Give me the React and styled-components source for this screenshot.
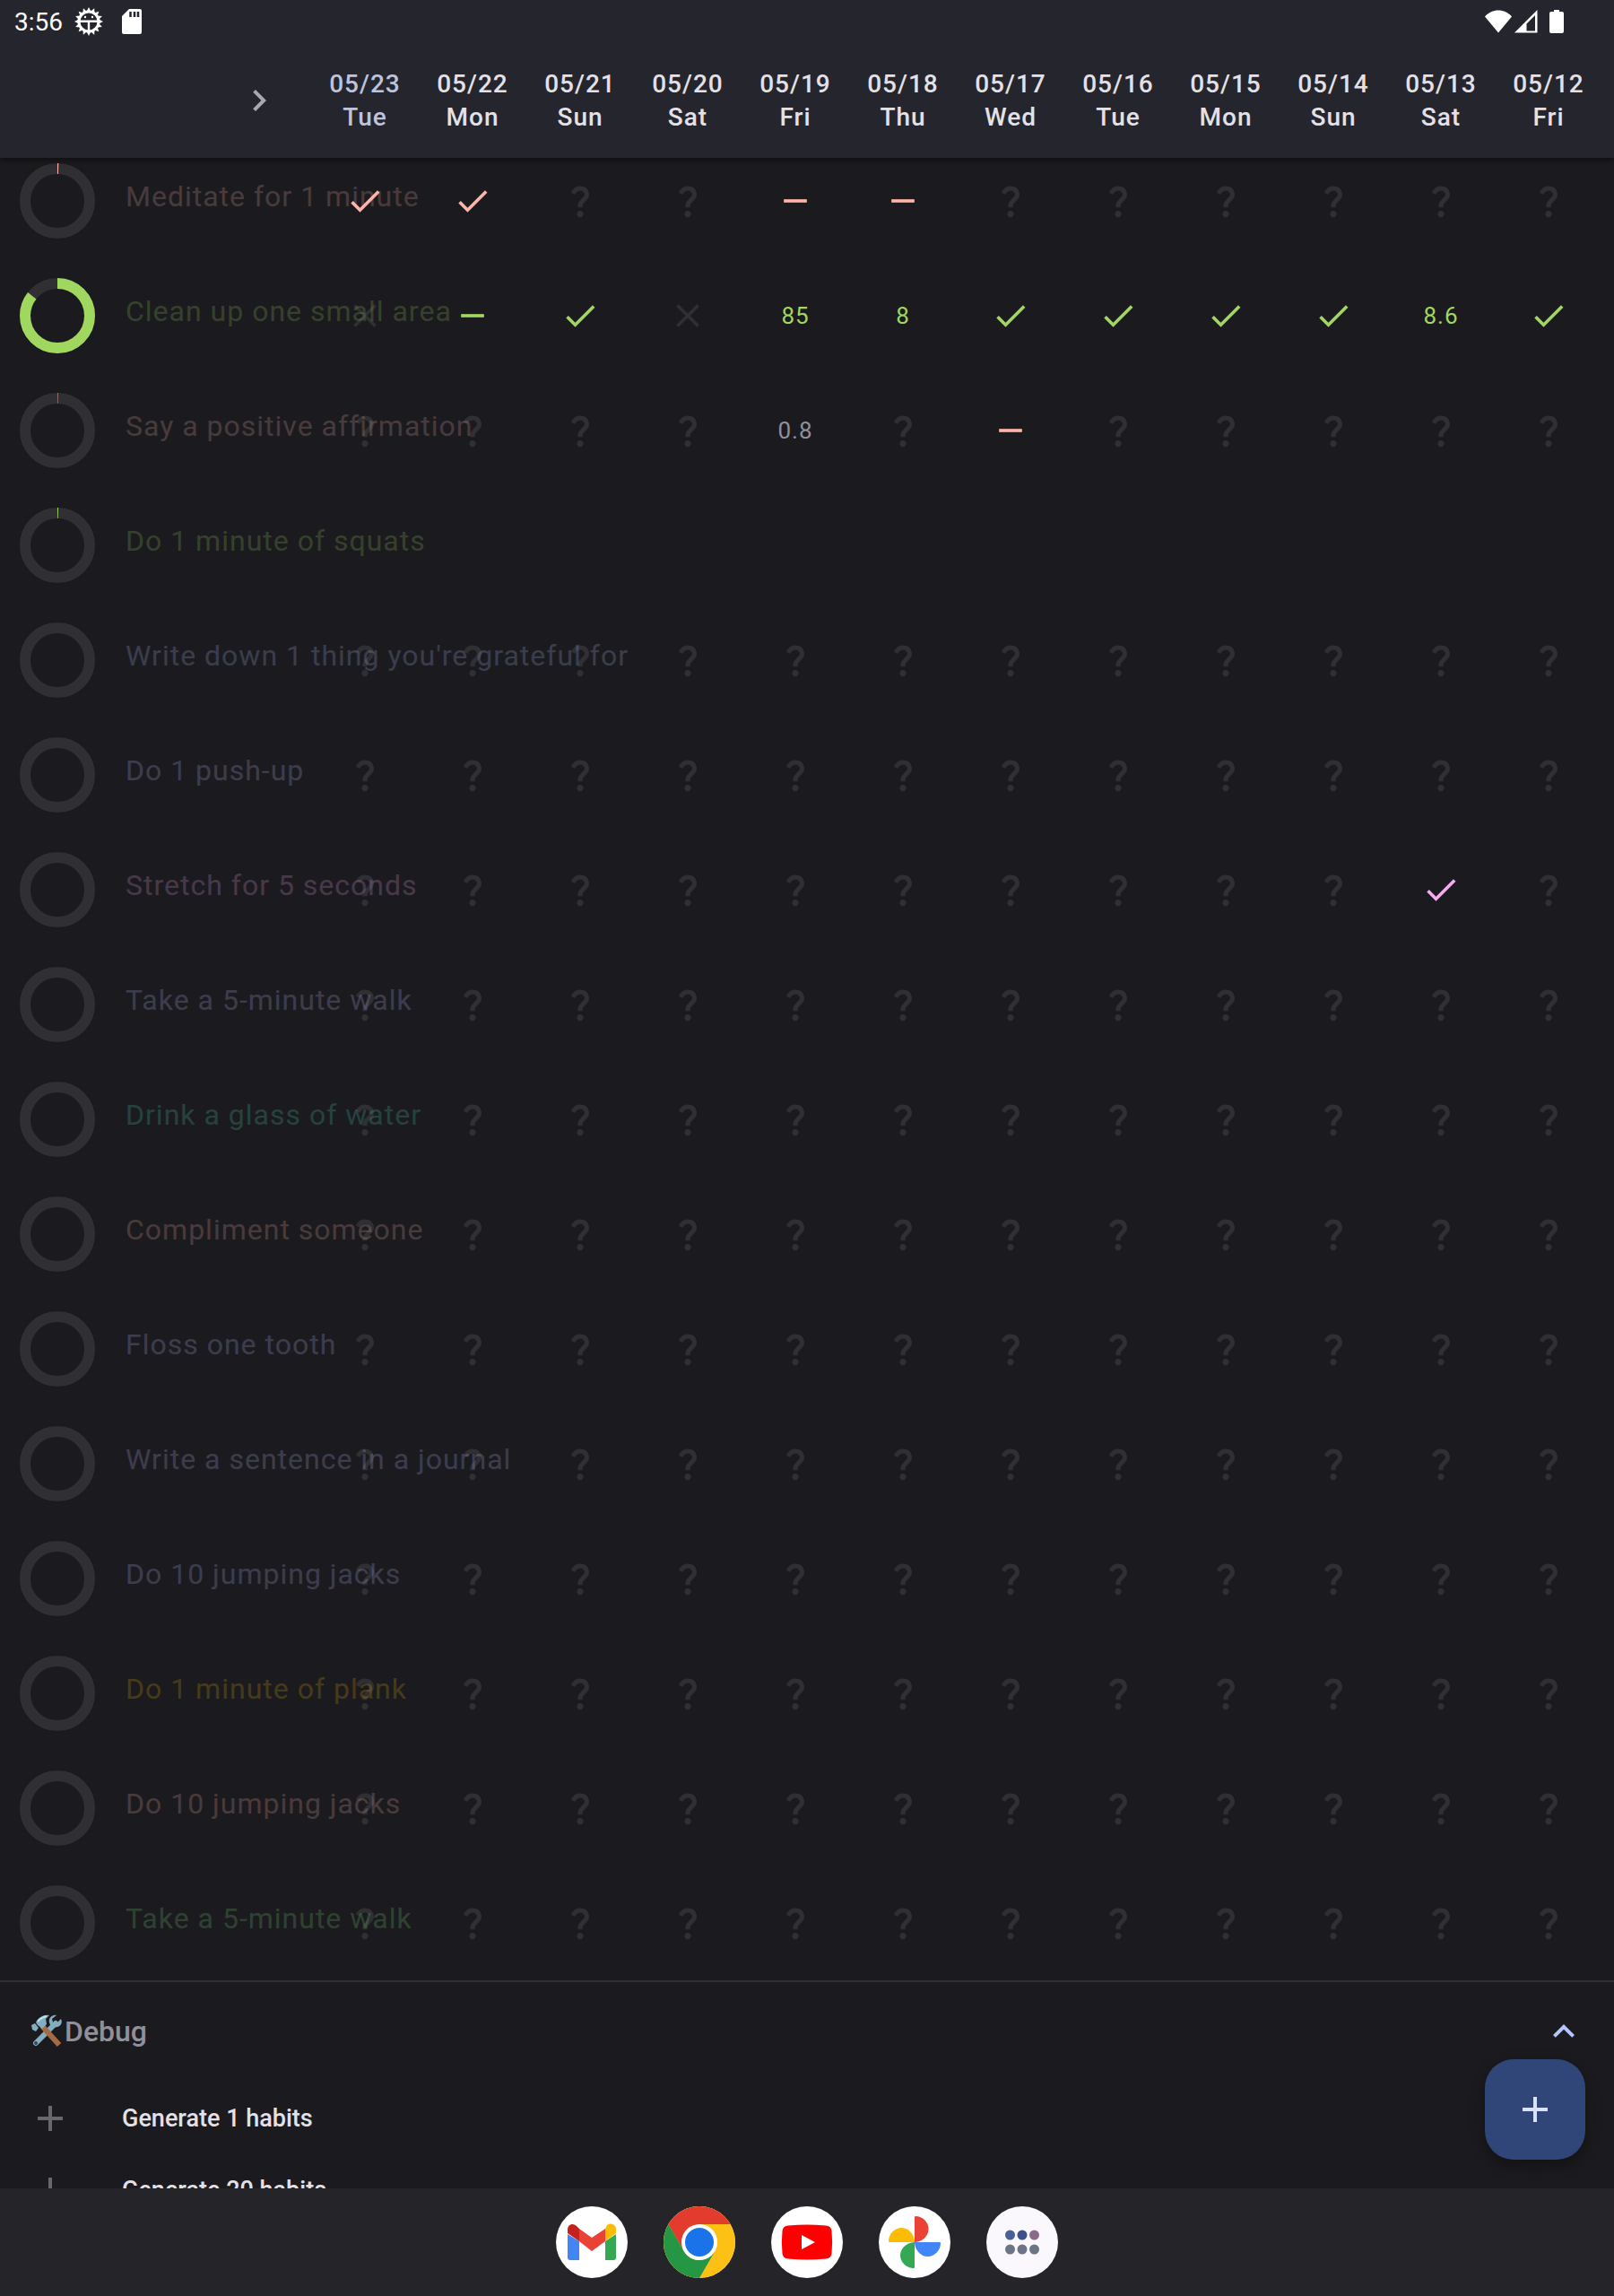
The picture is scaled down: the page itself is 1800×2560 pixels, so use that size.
import styled, { createGlobalStyle, css } from "styled-components";

const GlobalStyle = createGlobalStyle`
  * {
    box-sizing: border-box;
  }
  body {
    margin: 0;
    background: #1b1b1f;
    color: #e4e1e6;
    font-family: Roboto, "Liberation Sans", sans-serif;
  }
  button {
    margin: 0;
    padding: 0;
    border: 0;
    background: none;
    color: inherit;
    font: inherit;
    letter-spacing: inherit;
    cursor: pointer;
  }
`;

const Screen = styled.div`
  display: flex;
  flex-direction: column;
  height: 100vh;
  overflow: hidden;
`;

const TopBar = styled.header`
  position: relative;
  z-index: 1;
  flex: none;
  background: #25252e;
  box-shadow: 0 2px 8px rgba(0, 0, 0, 0.5);
`;

const StatusBar = styled.div`
  display: flex;
  align-items: center;
  justify-content: space-between;
  height: 48px;
  padding: 0 54px 0 16px;
  color: #fff;
`;

const StatusGroup = styled.div`
  display: flex;
  align-items: center;
  gap: ${(props) => props.$gap}px;
`;

const Clock = styled.time`
  padding-top: 2px;
  font-size: 28px;
  line-height: 48px;
`;

const DateBar = styled.div`
  display: flex;
  align-items: center;
  height: 128px;
  padding-right: 13px;
`;

const NavCell = styled.div`
  flex: 1;
  display: flex;
  justify-content: flex-end;
  padding-right: 34px;
`;

const IconButton = styled.button`
  display: flex;
  color: ${(props) => props.$color};
`;

const Dates = styled.div`
  display: flex;
`;

const DateCell = styled.div`
  width: 120px;
  text-align: center;
  font-size: 28px;
  font-weight: 500;
  line-height: 37px;
  letter-spacing: 1px;
  color: ${(props) => (props.$today ? "#bcc3dd" : "#e4e1e6")};
`;

const Content = styled.main`
  flex: 1;
  min-height: 0;
  overflow: hidden;
`;

/* the list is scrolled a little way under the top bar */
const HabitList = styled.ul`
  list-style: none;
  margin: -16px 0 0;
  padding: 0;
  border-bottom: 2px solid #303034;
`;

const HabitRow = styled.li`
  display: flex;
  align-items: center;
  height: 128px;
  padding: 0 13px 0 22px;
`;

const Ring = styled.svg`
  flex: none;
  width: 84px;
  height: 84px;
`;

const HabitName = styled.span`
  flex: 1;
  width: 0;
  padding: 0 0 10px 34px;
  font-size: 32px;
  line-height: 48px;
  letter-spacing: 1px;
  white-space: nowrap;
  color: ${(props) => props.$color};
  opacity: 0.2;
`;

const Marks = styled.div`
  display: flex;
  height: 128px;
`;

const Mark = styled.button`
  display: flex;
  align-items: center;
  justify-content: center;
  width: 120px;
  font-size: 26px;
  letter-spacing: 1px;
  color: ${(props) => props.$color};
`;

const DebugHeader = styled.div`
  display: flex;
  align-items: center;
  justify-content: space-between;
  height: 112px;
  padding: 0 32px 2px;
`;

const DebugTitle = styled.h2`
  display: flex;
  align-items: center;
  margin: 0;
  font-size: 32px;
  font-weight: 500;
  color: #91909a;
`;

const DebugItem = styled.button`
  display: flex;
  align-items: center;
  gap: 56px;
  width: 100%;
  height: 80px;
  padding: 0 32px;
  font-size: 27px;
  font-weight: 500;
  text-align: left;
  color: #e4e1e6;

  svg {
    color: #68686c;
  }
`;

const Fab = styled.button`
  position: fixed;
  right: 32px;
  bottom: 152px;
  display: flex;
  align-items: center;
  justify-content: center;
  width: 112px;
  height: 112px;
  border-radius: 32px;
  background: #304578;
  color: #dae1ff;
  box-shadow: 0 6px 16px rgba(0, 0, 0, 0.35);
`;

const Dock = styled.nav`
  flex: none;
  display: flex;
  align-items: center;
  justify-content: center;
  gap: 40px;
  height: 120px;
  background: #252529;
`;

const AppLink = styled.a`
  display: block;
  width: 80px;
  height: 80px;
  border-radius: 50%;
  overflow: hidden;
  background: ${(props) => props.$bg || "#fff"};

  svg {
    display: block;
  }
`;

const iconSize = css`
  width: ${(props) => props.$size || 48}px;
  height: ${(props) => props.$size || 48}px;
`;

const Svg = styled.svg`
  flex: none;
  fill: currentColor;
  ${iconSize}
`;

const muted = "#303034";
const salmon = "#ffb4a9";
const lime = "#a0d75e";
const blue = "#b8c3ff";
const lilac = "#c5c0ff";
const pink = "#f9aaf1";
const mint = "#4fdbc0";
const gold = "#f2b800";
const green = "#7bdb7c";

const paths = {
  check: "M9 16.17 4.83 12l-1.42 1.41L9 19 21 7l-1.41-1.41z",
  close:
    "M19 6.41 17.59 5 12 10.59 6.41 5 5 6.41 10.59 12 5 17.59 6.41 19 12 13.41 17.59 19 19 17.59 13.41 12z",
  dash: "M19 13H5v-2h14v2z",
  plus: "M19 13h-6v6h-2v-6H5v-2h6V5h2v6h6v2z",
  question:
    "M11.07 12.85c.77-1.39 2.25-2.21 3.11-3.44.91-1.29.4-3.7-2.18-3.7-1.69 0-2.52 1.28-2.87 2.34L6.54 6.96C7.25 4.83 9.18 3 11.99 3c2.35 0 3.96 1.07 4.78 2.41.7 1.15 1.11 3.3.03 4.9-1.2 1.77-2.35 2.31-2.97 3.45-.25.46-.35.76-.35 2.24h-2.89c-.01-.78-.13-2.05.48-3.15zM14 20c0 1.1-.9 2-2 2s-2-.9-2-2 .9-2 2-2 2 .9 2 2z",
  right: "M10 6 8.59 7.41 13.17 12l-4.58 4.59L10 18l6-6z",
  up: "m12 8-6 6 1.41 1.41L12 10.83l4.59 4.58L18 14z",
};

const dates = [
  ["05/23", "Tue"],
  ["05/22", "Mon"],
  ["05/21", "Sun"],
  ["05/20", "Sat"],
  ["05/19", "Fri"],
  ["05/18", "Thu"],
  ["05/17", "Wed"],
  ["05/16", "Tue"],
  ["05/15", "Mon"],
  ["05/14", "Sun"],
  ["05/13", "Sat"],
  ["05/12", "Fri"],
];

const unknown = Array(12).fill("?");

// v = done, - = skipped, x = missed, ? = no data, anything else is a value
const habits = [
  { name: "Meditate for 1 minute", color: salmon, score: 0.005, marks: ["v", "v", "?", "?", "-", "-", "?", "?", "?", "?", "?", "?"] },
  { name: "Clean up one small area", color: lime, score: 0.855, marks: ["x", "-", "v", "x", "85", "8", "v", "v", "v", "v", "8.6", "v"] },
  { name: "Say a positive affirmation", color: salmon, score: 0.002, marks: ["?", "?", "?", "?", "0.8", "?", "-", "?", "?", "?", "?", "?"] },
  { name: "Do 1 minute of squats", color: lime, score: 0.004, marks: [] },
  { name: "Write down 1 thing you're grateful for", color: blue, marks: unknown },
  { name: "Do 1 push-up", color: lilac, marks: unknown },
  { name: "Stretch for 5 seconds", color: pink, marks: unknown.map((m, i) => (i === 10 ? "v" : m)) },
  { name: "Take a 5-minute walk", color: lilac, marks: unknown },
  { name: "Drink a glass of water", color: mint, marks: unknown },
  { name: "Compliment someone", color: salmon, marks: unknown },
  { name: "Floss one tooth", color: lilac, marks: unknown },
  { name: "Write a sentence in a journal", color: lilac, marks: unknown },
  { name: "Do 10 jumping jacks", color: lilac, marks: unknown },
  { name: "Do 1 minute of plank", color: gold, marks: unknown },
  { name: "Do 10 jumping jacks", color: salmon, marks: unknown },
  { name: "Take a 5-minute walk", color: green, marks: unknown },
];

function Icon({ name, size }) {
  return (
    <Svg viewBox="0 0 24 24" $size={size} aria-hidden="true">
      <path d={paths[name]} />
    </Svg>
  );
}

function ScoreRing({ score, color }) {
  const length = 2 * Math.PI * 36;
  return (
    <Ring viewBox="0 0 84 84" fill="none" strokeWidth="12" aria-hidden="true">
      <circle cx="42" cy="42" r="36" stroke={muted} />
      {score && (
        <circle
          cx="42"
          cy="42"
          r="36"
          stroke={color}
          strokeDasharray={`${length * score} ${length}`}
          transform="rotate(-90 42 42)"
        />
      )}
    </Ring>
  );
}

function HabitMark({ value, color, label }) {
  if (value === "?") {
    return <Mark $color={muted} aria-label={label}><Icon name="question" size={44} /></Mark>;
  }
  if (value === "x") {
    return <Mark $color={muted} aria-label={label}><Icon name="close" size={44} /></Mark>;
  }
  if (value === "v") {
    return <Mark $color={color} aria-label={label}><Icon name="check" size={44} /></Mark>;
  }
  if (value === "-") {
    return <Mark $color={color} aria-label={label}><Icon name="dash" size={44} /></Mark>;
  }
  return <Mark $color={value === "0.8" ? "#91909a" : color}>{value}</Mark>;
}

function DebugBadge() {
  return (
    <svg width="40" height="40" viewBox="0 0 40 40" aria-hidden="true">
      <path d="M8 33 30 11" stroke="#82aec0" strokeWidth="6" strokeLinecap="round" />
      <path d="M36 6l-5 5-4-1-1-4 5-4c-5-1-9 3-8 8 1 5 6 6 9 5 4-1 6-5 4-9z" fill="#82aec0" />
      <circle cx="8" cy="33" r="2" fill="#2f4a56" />
      <path d="M15 14 34 35" stroke="#a56a43" strokeWidth="6" />
      <path d="M8 10c3-6 9-9 15-8l-4 4 1 6-5 5-5-4z" fill="#82aec0" />
      <path d="m3 13 4-2 4 5-3 4-4-2z" fill="#82aec0" />
      <path d="M10 9c3-4 6-5 10-6" stroke="#b9e4ea" strokeWidth="2" fill="none" />
    </svg>
  );
}

function StatusIcons() {
  return (
    <StatusGroup $gap={3}>
      <svg width="30" height="26" viewBox="0 0 30 26" fill="#fff" aria-hidden="true">
        <path d="M0 7.500C8-1.800 22-1.800 30 7.500L15 25.500z" />
      </svg>
      <svg width="26" height="26" viewBox="0 0 26 26" fill="#fff" aria-hidden="true">
        <path fillRule="evenodd" d="M0 25.500 25.500 0v25.500zM13.500 15.500v8h9.500V6z" />
      </svg>
      <svg width="28" height="26" viewBox="0 0 28 26" fill="#fff" aria-hidden="true">
        <path d="M15 0h6v2h3q2 0 2 2v20q0 2-2 2H12q-2 0-2-2V4q0-2 2-2h3z" />
      </svg>
    </StatusGroup>
  );
}

function DebugStatusIcon() {
  const teeth = Array.from({ length: 16 }, (_, i) => i * 22.5);
  return (
    <svg width="32" height="32" viewBox="-16 -16 32 32" fill="#fff" aria-hidden="true">
      {teeth.map((angle) => (
        <path key={angle} d="M-2.500-11 0-16 2.500-11z" transform={`rotate(${angle})`} />
      ))}
      <circle r="11" fill="none" stroke="#fff" strokeWidth="3" />
      <path d="M-11-1.500H11V1H1.200V11h-2.400V1H-11z" />
      <circle cx="-4" cy="-5" r="1.200" />
      <circle cx="4" cy="-5" r="1.200" />
    </svg>
  );
}

function SdCardIcon() {
  return (
    <svg width="30" height="28" viewBox="-8 0 30 28" aria-hidden="true">
      <path d="M8 0h12q2 0 2 2v24q0 2-2 2H2q-2 0-2-2V8z" fill="#fff" />
      <path d="M9.500 3v6M14 3v6M18 3v6" stroke="#25252e" strokeWidth="2.500" />
    </svg>
  );
}

function GmailIcon() {
  return (
    <svg viewBox="0 0 80 80" width="80" height="80">
      <path d="M13 31v26q0 3 3 3h10V39z" fill="#4285f4" />
      <path d="M55 39v21h9q3 0 3-3V31z" fill="#34a853" />
      <path d="M55 25v14l12-9v-4c0-6-6-8-10-5z" fill="#fbbc04" />
      <path d="M26 39V25l14 10 15-10v14L40 50z" fill="#ea4335" />
      <path d="M13 26v4l13 9V25l-3-3c-4-4-10-2-10 4z" fill="#c5221f" />
    </svg>
  );
}

function ChromeIcon() {
  return (
    <svg viewBox="0 0 80 80" width="80" height="80">
      <rect width="80" height="80" fill="#fdc014" />
      <path d="M0 0h80v20H40L22.700 50 5.400 20z" fill="#e33b2e" />
      <path d="M5.400 20 22.700 50q6 10 17.300 10l17.300-10L40 80H0V20z" fill="#249644" />
      <circle cx="40" cy="40" r="20" fill="#fff" />
      <circle cx="40" cy="40" r="16" fill="#1a73e8" />
    </svg>
  );
}

function YoutubeIcon() {
  return (
    <svg viewBox="0 0 80 80" width="80" height="80">
      <path d="M19 21.500q21-2 42 0 6 .5 6.500 6 1.300 12.500 0 25-.5 5.500-6.500 6-21 2-42 0-6-.5-6.500-6-1.300-12.500 0-25 .5-5.500 6.500-6z" fill="#f00" />
      <path d="M34 32v16l15-8z" fill="#fff" />
    </svg>
  );
}

function PhotosIcon() {
  return (
    <svg viewBox="0 0 80 80" width="80" height="80">
      <path d="M40 40V12q0-1 1-1c8 0 14.500 6.500 14.500 14.500S48 40 40 40z" fill="#ea4335" />
      <path d="M40 40h28q1 0 1 1c0 8-6.500 15-14.500 15S40 48 40 40z" fill="#4285f4" />
      <path d="M40 40v28q0 1-1 1c-8 0-15-6.500-15-14.500S32 40 40 40z" fill="#34a853" />
      <path d="M40 40H12q-1 0-1-1c0-8 6.500-15 14.500-15S40 32 40 40z" fill="#fbbc04" />
    </svg>
  );
}

function AllAppsIcon() {
  return (
    <svg viewBox="0 0 80 80" width="80" height="80">
      <circle cx="26.500" cy="32" r="5.500" fill="#485f97" />
      <circle cx="40" cy="32" r="5.500" fill="#3d5089" />
      <circle cx="53.500" cy="32" r="5.500" fill="#8b6b8b" />
      <circle cx="26.500" cy="48" r="5.500" fill="#6e7488" />
      <circle cx="40" cy="48" r="5.500" fill="#6e7488" />
      <circle cx="53.500" cy="48" r="5.500" fill="#6e7488" />
    </svg>
  );
}

function App() {
  return (
    <>
      <GlobalStyle />
      <Screen>
        <TopBar>
          <StatusBar>
            <StatusGroup $gap={13}>
              <Clock>3:56</Clock>
              <DebugStatusIcon />
              <SdCardIcon />
            </StatusGroup>
            <StatusIcons />
          </StatusBar>
          <DateBar>
            <NavCell>
              <IconButton $color="#a9a9ad" aria-label="Earlier dates">
                <Icon name="right" size={48} />
              </IconButton>
            </NavCell>
            <Dates>
              {dates.map(([date, day], index) => (
                <DateCell key={date} $today={index === 0}>
                  <div>{date}</div>
                  <div>{day}</div>
                </DateCell>
              ))}
            </Dates>
          </DateBar>
        </TopBar>

        <Content>
          <HabitList>
            {habits.map((habit, index) => (
              <HabitRow key={index}>
                <ScoreRing score={habit.score} color={habit.color} />
                <HabitName $color={habit.color}>{habit.name}</HabitName>
                <Marks>
                  {dates.map(([date], i) =>
                    habit.marks[i] ? (
                      <HabitMark key={date} value={habit.marks[i]} color={habit.color} label={`${habit.name} ${date}`} />
                    ) : (
                      <Mark key={date} aria-label={`${habit.name} ${date}`} />
                    )
                  )}
                </Marks>
              </HabitRow>
            ))}
          </HabitList>

          <DebugHeader>
            <DebugTitle>
              <DebugBadge />
              Debug
            </DebugTitle>
            <IconButton $color="#b4c5ff" aria-label="Collapse debug">
              <Icon name="up" size={48} />
            </IconButton>
          </DebugHeader>
          <DebugItem>
            <Icon name="plus" size={48} />
            Generate 1 habits
          </DebugItem>
          <DebugItem>
            <Icon name="plus" size={48} />
            Generate 20 habits
          </DebugItem>
        </Content>

        <Dock>
          <AppLink href="#gmail" aria-label="Gmail"><GmailIcon /></AppLink>
          <AppLink href="#chrome" aria-label="Chrome"><ChromeIcon /></AppLink>
          <AppLink href="#youtube" aria-label="YouTube"><YoutubeIcon /></AppLink>
          <AppLink href="#photos" aria-label="Photos"><PhotosIcon /></AppLink>
          <AppLink href="#apps" aria-label="All apps" $bg="#faf8fd"><AllAppsIcon /></AppLink>
        </Dock>

        <Fab aria-label="Add habit">
          <Icon name="plus" size={48} />
        </Fab>
      </Screen>
    </>
  );
}

export default App;
